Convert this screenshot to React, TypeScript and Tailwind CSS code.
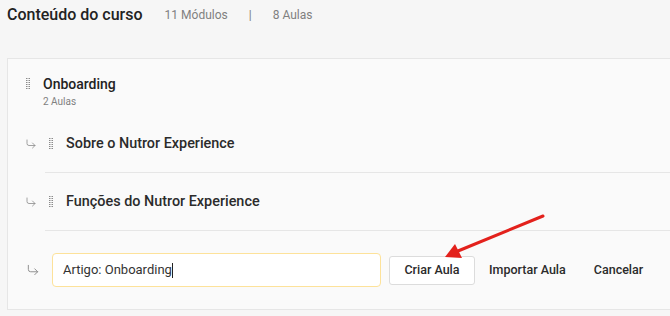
import { CornerDownRight } from "lucide-react";

function DragHandle() {
  return (
    <svg width="4" height="11" viewBox="0 0 4 11" className="shrink-0">
      {[0, 2, 4, 6, 8, 10].map((y) => (
        <g key={y} fill="#8a8a8a">
          <rect x="0" y={y} width="1.5" height="1" />
          <rect x="2.5" y={y} width="1.5" height="1" />
        </g>
      ))}
    </svg>
  );
}

function LessonRow({ title }: { title: string }) {
  return (
    <div className="flex items-center">
      <div className="w-[37px] pl-[17px] text-[#8a8a8a]">
        <CornerDownRight size={12} strokeWidth={1.6} />
      </div>
      <div className="flex flex-1 h-[58px] items-center gap-[13px] border-b border-[#e6e6e6] pl-[4px]">
        <DragHandle />
        <span className="text-[14.4px] font-medium text-[#2b2b2b]">{title}</span>
      </div>
    </div>
  );
}

export default function App() {
  return (
    <div
      className="relative w-[670px] h-[316px] overflow-hidden bg-[#f6f6f6]"
      style={{ fontFamily: "Roboto, 'Liberation Sans', sans-serif" }}
    >
      <div className="flex items-center h-[30px] pl-[7px]">
        <h1 className="text-[16px] font-medium text-[#222] mr-[22px]">Conteúdo do curso</h1>
        <span className="text-[12px] text-[#808080]">11 Módulos</span>
        <span className="text-[12px] text-[#808080] mx-[21px]">|</span>
        <span className="text-[12px] text-[#808080]">8 Aulas</span>
      </div>

      <div className="ml-[7px] mt-[28px] bg-[#fafafa] border-l border-t border-b border-[#e6e6e6]">
        <div className="flex items-start gap-[13px] pl-[18px] pt-[15px]">
          <div className="pt-[4px]">
            <DragHandle />
          </div>
          <div className="flex flex-col">
            <span className="text-[14px] leading-[20px] font-medium text-[#222]">Onboarding</span>
            <span className="text-[10px] leading-[14px] text-[#808080] mt-[1px]">2 Aulas</span>
          </div>
        </div>

        <div className="mt-[6px]">
          <LessonRow title="Sobre o Nutror Experience" />
          <LessonRow title="Funções do Nutror Experience" />
        </div>

        <div className="flex items-center h-[78px]">
          <div className="w-[44px] pl-[18px] text-[#8a8a8a]">
            <CornerDownRight size={14} strokeWidth={1.6} />
          </div>
          <div className="flex items-center h-[34px] w-[329px] rounded-[4px] border border-[#fde29a] bg-white pl-[10px] text-[13px] text-[#333]">
            Artigo: Onboarding<span className="w-px h-[15px] bg-[#222]" />
          </div>
          <button className="ml-[8px] h-[29px] w-[86px] rounded-[3px] border border-[#dcdcdc] bg-white text-[12.5px] font-medium text-[#2b2b2b]">
            Criar Aula
          </button>
          <button className="ml-[14px] text-[12.5px] font-medium text-[#2b2b2b]">Importar Aula</button>
          <button className="ml-[28px] text-[12.5px] font-medium text-[#2b2b2b]">Cancelar</button>
        </div>
      </div>

      <svg className="absolute left-0 top-0 pointer-events-none" width="670" height="316">
        <line x1="543" y1="216" x2="458" y2="251" stroke="#e3211c" strokeWidth="3" strokeLinecap="round" />
        <polygon points="445,257 455,244 462,258" fill="#e3211c" />
      </svg>
    </div>
  );
}
